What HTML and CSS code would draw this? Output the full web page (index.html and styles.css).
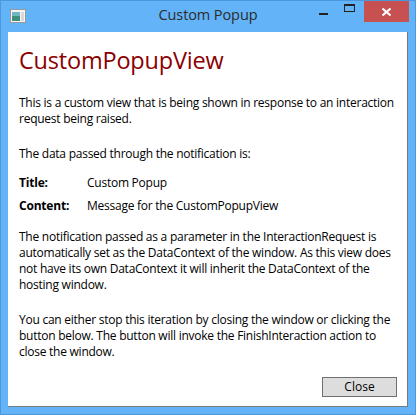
FILE: index.html
```html
<!DOCTYPE html>
<html>
<head>
<meta charset="utf-8">
<link rel="stylesheet" href="styles.css">
</head>
<body>
<div class="window">
  <div class="titlebar">
    <div class="app-icon">
      <svg width="16" height="14" viewBox="0 0 16 14">
        <rect x="0.5" y="0.5" width="15" height="13" fill="#f4f4f4" stroke="#9a9a9a"/>
        <rect x="2" y="3" width="8" height="9" fill="#3f8f7a"/>
        <rect x="2" y="3" width="8" height="4" fill="#6fb7c4"/>
        <rect x="11" y="3" width="3" height="9" fill="#d8d8d8"/>
      </svg>
    </div>
    <div class="title">Custom Popup</div>
    <div class="controls">
      <div class="ctl min"><span class="dash"></span></div>
      <div class="ctl max"><span class="box"></span></div>
      <div class="ctl close">
        <svg width="9" height="8" viewBox="0 0 9 8"><path d="M0.5 0.5 L8.5 7.5 M8.5 0.5 L0.5 7.5" stroke="#fff" stroke-width="2"/></svg>
      </div>
    </div>
  </div>
  <div class="client">
    <h1 class="heading">CustomPopupView</h1>
    <p class="para first">This is a custom view that is being shown in response to an interaction request being raised.</p>
    <p class="para gap-data">The data passed through the notification is:</p>
    <div class="fields">
      <div class="label">Title:</div><div class="value">Custom Popup</div>
      <div class="label">Content:</div><div class="value">Message for the CustomPopupView</div>
    </div>
    <p class="para">The notification passed as a parameter in the InteractionRequest is automatically set as the DataContext of the window. As this view does not have its own DataContext it will inherit the DataContext of the hosting window.</p>
    <p class="para gap-big">You can either stop this iteration by closing the window or clicking the button below. The button will invoke the FinishInteraction action to close the window.</p>
    <div class="footer"><button class="btn">Close</button></div>
  </div>
</div>
</body>
</html>
```
FILE: styles.css
```css
html, body { margin: 0; padding: 0; }
body { width: 416px; height: 415px; overflow: hidden; font-family: "Open Sans", "Noto Sans", sans-serif; }
.window {
  box-sizing: border-box;
  width: 416px; height: 415px;
  background: #63b3f8;
  border: 1px solid #4c97dc;
  display: flex; flex-direction: column;
}
.titlebar {
  height: 30px;
  display: flex; align-items: flex-start;
  position: relative;
}
.app-icon { margin: 8px 0 0 9px; height: 14px; }
.app-icon svg { display: block; }
.title {
  position: absolute; left: 0; right: 0; top: 4px;
  text-align: center; font-size: 14.5px; color: #2b2b2b; letter-spacing: -0.1px;
}
.controls { margin-left: auto; display: flex; margin-right: 6px; }
.ctl { height: 20px; display: flex; align-items: center; justify-content: center; }
.min { width: 26px; }
.min .dash { width: 9px; height: 2px; background: #222; margin-top: 5px; margin-left: -4px; }
.max { width: 26px; }
.max .box { border: solid #222; border-width: 2px 1px 1px 1px; width: 9px; height: 5px; margin-top: -6px; margin-left: -3px; }
.close { width: 45px; background: #c75050; height: 21px; }
.client {
  margin: 1px 7px 0 7px;
  height: 374px;
  background: #fff;
  border-right: 1px solid #7a7a7a;
  border-bottom: 1px solid #7a7a7a;
  padding: 0 10px 0 11px;
  display: flex; flex-direction: column;
  font-size: 12px; color: #000;
}
.heading {
  margin: 13px 0 0 0;
  font-weight: normal; font-size: 23.5px; color: #8b0000; line-height: 30px;
  letter-spacing: -0.2px;
}
.para { margin: 15px 0 0 0; line-height: 16px; letter-spacing: -0.25px; }
.para.first { margin-top: 20px; }
.gap-data { margin-top: 19px; }
.fields {
  display: grid; grid-template-columns: 68px 1fr; row-gap: 7px;
  margin-top: 13px; line-height: 16px; letter-spacing: -0.25px;
}
.label { font-weight: bold; letter-spacing: -0.2px; }
.gap-big { margin-top: 19px; }
.footer { margin-top: auto; margin-bottom: 9px; display: flex; justify-content: flex-end; }
.btn {
  width: 75px; height: 20px;
  background: #dddddd; border: 1px solid #707070;
  font-family: inherit; font-size: 12px; color: #000; padding: 0; line-height: 16px;
}
```
